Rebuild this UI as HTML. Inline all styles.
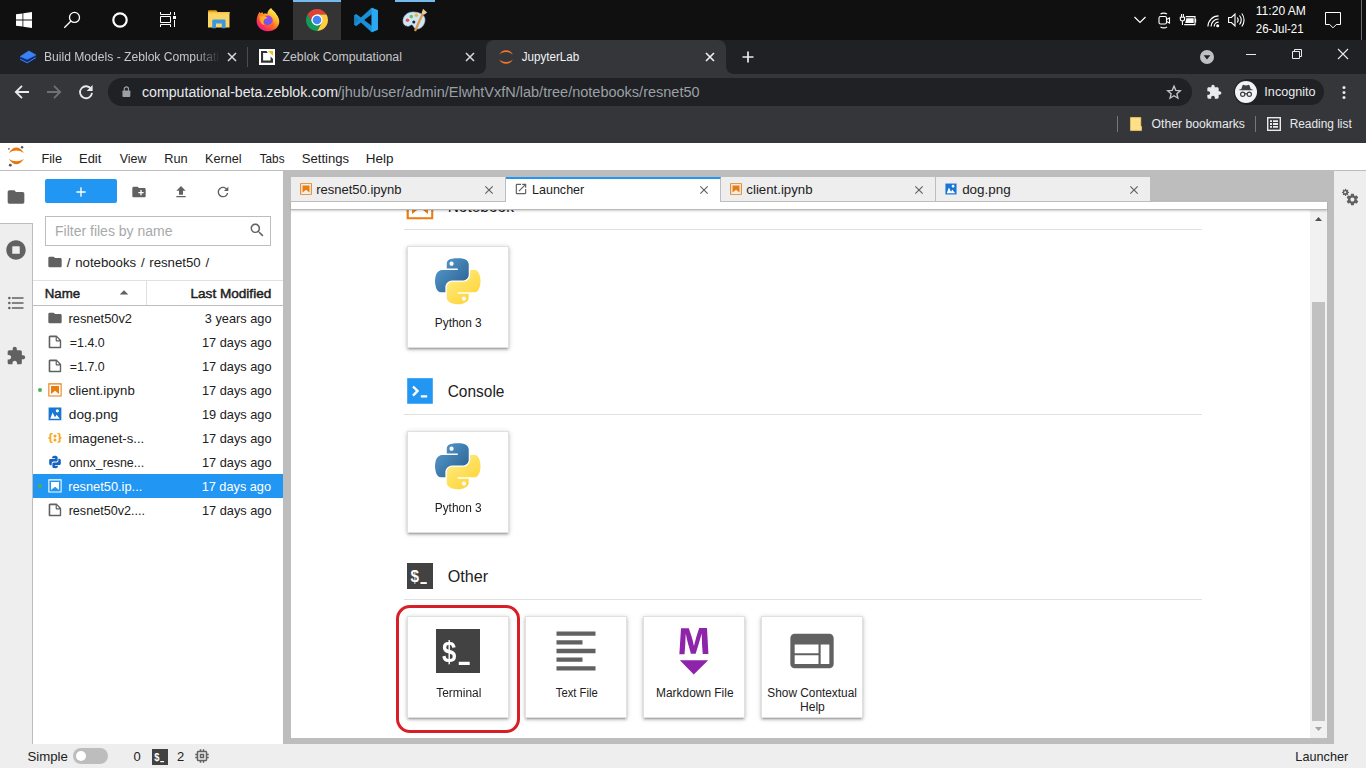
<!DOCTYPE html>
<html><head><meta charset="utf-8"><title>JupyterLab</title>
<style>
*{box-sizing:border-box;margin:0;padding:0}
html,body{width:1366px;height:768px;overflow:hidden;background:#fff;font-family:"Liberation Sans",sans-serif;}
.a{position:absolute}
.t{position:absolute;white-space:nowrap;line-height:1;transform-origin:0 50%}
svg{position:absolute;overflow:visible}
#tb{left:0;top:0;width:1366px;height:40px;background:#101010}
#strip{left:0;top:40px;width:1366px;height:34px;background:#202124}
#tool{left:0;top:74px;width:1366px;height:69px;background:#35363a}
#omni{left:108px;top:78px;width:1084px;height:28px;border-radius:14px;background:#202124}
.ct{color:#e8eaed;font-size:12px}
#menu{left:0;top:143px;width:1366px;height:28px;background:#fff;border-bottom:1px solid #bdbdbd}
.mi{color:#212121;font-size:13px;top:152px}
#lside{left:0;top:171px;width:33px;height:573px;background:#eee;border-right:1px solid #bdbdbd}
#rside{left:1334px;top:171px;width:32px;height:573px;background:#eee;}
#fb{left:33px;top:171px;width:250px;height:573px;background:#fff}
#dock{left:283px;top:171px;width:1051px;height:573px;background:#bdbdbd}
#status{left:0;top:744px;width:1366px;height:24px;background:#eee}
.f{font-size:13px;color:#212121}
.row{left:33px;width:250px;height:24px}
.card{width:102px;height:102px;background:#fff;border:1px solid #e0e0e0;box-shadow:0 2px 2px 0 rgba(0,0,0,.14),0 3px 1px -2px rgba(0,0,0,.12),0 1px 5px 0 rgba(0,0,0,.2)}
/*x*/.cl{font-size:12.5px;color:#212121;text-align:center;width:100px;line-height:14px;white-space:nowrap}
.sl{height:1px;background:#e0e0e0;left:404px;width:798px}
.st{font-size:16px;color:#212121}
#tt2{transform:translateX(-0.49px) scaleX(1.0226);transform-origin:0 50%}
#tt3{transform:translateX(-0.35px) scaleX(0.9699);transform-origin:0 50%}
#urlh{transform:translateX(-0.08px) scaleX(1.0121);transform-origin:0 50%}
#urlp{transform:translateX(-0.46px) scaleX(1.0362);transform-origin:0 50%}
#inc{transform:translateX(-0.64px) scaleX(1.0514);transform-origin:0 50%}
#ob{transform:translateX(-0.42px) scaleX(1.0144);transform-origin:0 50%}
#rl{transform:translateX(-0.35px) scaleX(0.9898);transform-origin:0 50%}
#clk1{transform:translateX(-0.21px) scaleX(1.0063);transform-origin:0 50%}
#clk2{transform:translateX(-0.26px) scaleX(0.9569);transform-origin:0 50%}
#m0{transform:translateX(-1.55px) scaleX(0.9805);transform-origin:0 50%}
#m1{transform:translateX(-0.93px) scaleX(0.9901);transform-origin:0 50%}
#m2{transform:translateX(-0.24px) scaleX(0.9573);transform-origin:0 50%}
#m3{transform:translateX(-0.71px) scaleX(0.9819);transform-origin:0 50%}
#m4{transform:translateX(0.01px) scaleX(0.9718);transform-origin:0 50%}
#m5{transform:translateX(0.72px) scaleX(0.9023);transform-origin:0 50%}
#m6{transform:translateX(-0.26px) scaleX(1.0065);transform-origin:0 50%}
#m7{transform:translateX(-0.25px) scaleX(1.0359);transform-origin:0 50%}
#bc{transform:translateX(-0.18px) scaleX(1.0170);transform-origin:0 50%}
#hn{transform:translateX(-1.25px) scaleX(1.0199);transform-origin:0 50%}
#hm{transform:translateX(-0.52px) scaleX(1.0449);transform-origin:0 50%}
#fn0{transform:translateX(-0.47px) scaleX(0.9861);transform-origin:0 50%}
#fn1{transform:translateX(0.86px) scaleX(0.9525);transform-origin:0 50%}
#fn2{transform:translateX(0.86px) scaleX(0.9525);transform-origin:0 50%}
#fn3{transform:translateX(-0.17px) scaleX(1.0134);transform-origin:0 50%}
#fn4{transform:translateX(-0.21px) scaleX(1.0493);transform-origin:0 50%}
#fn5{transform:translateX(-0.45px) scaleX(1.0064);transform-origin:0 50%}
#fn6{transform:translateX(-0.08px) scaleX(0.9543);transform-origin:0 50%}
#fn7{transform:translateX(-0.83px) scaleX(0.9862);transform-origin:0 50%}
#fn8{transform:translateX(-0.36px) scaleX(0.9705);transform-origin:0 50%}
#fd0{transform:translateX(0.53px) scaleX(0.9803);transform-origin:100% 50%}
#dt0{transform:translateX(-1.87px) scaleX(1.0021);transform-origin:0 50%}
#dt1{transform:translateX(-0.97px) scaleX(0.9628);transform-origin:0 50%}
#dt2{transform:translateX(-1.63px) scaleX(1.0167);transform-origin:0 50%}
#dt3{transform:translateX(-0.85px) scaleX(1.0325);transform-origin:0 50%}
#st_Notebook{transform:translateX(-1.29px) scaleX(0.9912);transform-origin:0 50%}
#st_Console{transform:translateX(-1.29px) scaleX(0.9912);transform-origin:0 50%}
#st_Other{transform:translateX(-1.35px) scaleX(1.0352);transform-origin:0 50%}
#c1{transform:translateX(0.56px) scaleX(0.9499);transform-origin:50% 50%}
#c2{transform:translateX(0.54px) scaleX(0.9515);transform-origin:50% 50%}
#c3{transform:translateX(1.17px) scaleX(0.9546);transform-origin:50% 50%}
#c4{transform:translateX(0.46px) scaleX(0.8985);transform-origin:50% 50%}
#c5{transform:translateX(1.16px) scaleX(0.9528);transform-origin:50% 50%}
#c6a{transform:translateX(-0.13px) scaleX(0.9473);transform-origin:50% 50%}
#c6b{transform:translateX(0.50px) scaleX(0.9691);transform-origin:50% 50%}
#sb1{transform:translateX(-0.56px) scaleX(1.0158);transform-origin:0 50%}
#sb4{transform:translateX(-0.65px) scaleX(0.9748);transform-origin:0 50%}
#fd1{transform:translateX(0.67px) scaleX(0.9818);transform-origin:100% 50%}
#fd2{transform:translateX(0.67px) scaleX(0.9818);transform-origin:100% 50%}
#fd3{transform:translateX(0.67px) scaleX(0.9818);transform-origin:100% 50%}
#fd4{transform:translateX(0.67px) scaleX(0.9818);transform-origin:100% 50%}
#fd5{transform:translateX(0.67px) scaleX(0.9818);transform-origin:100% 50%}
#fd6{transform:translateX(0.67px) scaleX(0.9818);transform-origin:100% 50%}
#fd7{transform:translateX(0.19px) scaleX(0.9794);transform-origin:100% 50%}
#fd8{transform:translateX(0.67px) scaleX(0.9818);transform-origin:100% 50%}
</style></head><body>
<div class="a" id="tb"></div>
<div class="a" id="strip"></div>
<div class="a" id="tool"></div>
<div class="a" id="omni"></div>
<div class="a" id="menu"></div>
<div class="a" id="lside"></div>
<div class="a" id="fb"></div>
<div class="a" id="dock"></div>
<div class="a" id="rside"></div>
<div class="a" id="status"></div>
<!-- taskbar -->
<div class="a" style="left:293px;top:0;width:48px;height:40px;background:#343434"></div>
<div class="a" style="left:293px;top:0;width:48px;height:2px;background:#76b9ed"></div>
<div class="a" style="left:395px;top:0;width:40px;height:2px;background:#76b9ed"></div>
<svg style="left:16px;top:12px" width="16" height="16" viewBox="0 0 16 16"><path fill="#fff" d="M0 2.300 6.500 1.400v6.200H0zM7.300 1.300 16 0v7.600H7.300zM0 8.400h6.500v6.200L0 13.700zM7.300 8.400H16V16l-8.700-1.200z"/></svg>
<svg style="left:62px;top:10px" width="20" height="20" viewBox="0 0 20 20"><circle cx="12.500" cy="7.400" r="5" fill="none" stroke="#fff" stroke-width="1.300"/><path d="M9 11 2.300 17.800" stroke="#fff" stroke-width="1.300" fill="none"/></svg>
<svg style="left:110px;top:10px" width="20" height="20" viewBox="0 0 20 20"><circle cx="10" cy="10" r="6.700" fill="none" stroke="#fff" stroke-width="2.200"/></svg>
<svg style="left:160px;top:12px" width="16" height="15" viewBox="0 0 16 15"><g fill="none" stroke="#fff" stroke-width="1"><path d="M.5 0V2.500H10.500V0M.5 4.500h10v6H.5zM.5 15V12.500H10.500V15M14.500 0V3M14.500 8V15"/></g><rect x="13" y="4" width="3" height="3" fill="#fff"/></svg>
<svg style="left:208px;top:10px" width="22" height="19" viewBox="0 0 22 19"><path fill="#e0a30e" d="M0 1.200C0 .6.400.3 1 .3h7.200l1.600 1.900H0z"/><path fill="#fbd667" d="M0 2h21.500v15.500H0z"/><path fill="#f6c649" d="M0 2h21.500v1.500H0z"/><path fill="#3b98e0" d="M4.200 18.300V11c0-.8.600-1.400 1.400-1.400h10.600c.8 0 1.400.6 1.400 1.400v7.300h-3.800v-4.800H8v4.800z"/></svg>
<!-- firefox -->
<svg style="left:256px;top:8px" width="24" height="24" viewBox="0 0 24 24"><defs><linearGradient id="ffg" x1="0.850" y1="0.100" x2="0.250" y2="0.950"><stop offset="0" stop-color="#fff25e"/><stop offset="0.300" stop-color="#ffbd2f"/><stop offset="0.550" stop-color="#ff7a22"/><stop offset="0.800" stop-color="#ff3550"/><stop offset="1" stop-color="#ee1f86"/></linearGradient><linearGradient id="ffp" x1="0.600" y1="0" x2="0.400" y2="1"><stop offset="0" stop-color="#b03fe0"/><stop offset="1" stop-color="#5560f2"/></linearGradient><linearGradient id="ffh" x1="0" y1="0" x2="1" y2="0.600"><stop offset="0" stop-color="#ff9a1f"/><stop offset="1" stop-color="#ffc23a"/></linearGradient></defs><path fill="url(#ffg)" d="M15.100 0C16.500 2.500 19 3.500 20.500 6.500C22.500 9 23.300 11.500 23.300 13.500C23.300 19 18.500 23.200 12 23.200C5.500 23.200.6 19 .6 13C.6 9 2 6 3.800 3.800L4.600 5.600 6.300 4 7.200 5.900C8.500 5.300 10 5.300 11.200 5.900C11.500 3.500 13 1.500 15.100 0z"/><circle cx="12" cy="12.300" r="4.700" fill="url(#ffp)"/><path fill="url(#ffh)" d="M3.300 8.300C6 7.300 9.300 7.800 11.600 10.100C10 10.300 8.400 11 7.700 12.400C7 14 7.500 16 9 17.300C5.800 17 3.400 14 3.300 8.300z"/><path fill="#ff5a30" opacity=".55" d="M7 15.500C8 18 11 19 13.500 18C16 17 17 14.500 16.600 12.500C18.500 15 17.500 19 14 20.300C10.500 21.500 7.200 19.500 7 15.500z"/></svg>
<!-- chrome -->
<svg style="left:305px;top:8px" width="24" height="24" viewBox="0 0 48 48"><circle cx="24" cy="24" r="12" fill="#fff"/><path fill="#db4437" d="M4.95 13.0A22 22 0 0 1 43.05 13.0L24.0 13.0A11 11 0 0 0 14.47 29.5z"/><path fill="#ffcd40" d="M43.05 13.0A22 22 0 0 1 24.0 46.0L33.53 29.5A11 11 0 0 0 24.0 13.0z"/><path fill="#0f9d58" d="M24.0 46.0A22 22 0 0 1 4.95 13.0L14.47 29.5A11 11 0 0 0 33.53 29.5z"/><circle cx="24" cy="24" r="10.800" fill="#fff"/><circle cx="24" cy="24" r="8.600" fill="#4285f4"/></svg>
<!-- vscode -->
<svg style="left:353px;top:7px" width="26" height="26" viewBox="0 0 24 24"><path fill="#1a8fd8" d="M17.200 0.700 7.300 9.800 3 6.500 1 7.500v9l2 1 4.300-3.300 9.900 9.100 5.800-2.400V3.100zM17.200 6.800v10.400L10.300 12z"/><path fill="#1478be" d="M1 7.500l4.500 4.500L1 16.500z" opacity=".7"/><path fill="#2aa9f2" d="M17.200.7 23 3.100v17.800l-5.800 2.400z"/></svg>
<!-- paint -->
<svg style="left:402px;top:8px" width="26" height="24" viewBox="0 0 26 24"><path fill="#cfe6f7" stroke="#9fc4e0" stroke-width=".6" d="M11 4C5 4 1 8.300 1 13c0 3.500 2.500 5.200 5 5.200 1.800 0 2.300-1.500 3.800-1.500 1.700 0 1.700 4.300 5.200 4.300 4 0 8-4 8-9.500C23 7 17.500 4 11 4z"/><circle cx="5.500" cy="12.200" r="1.800" fill="#e0584a"/><circle cx="9.300" cy="8.600" r="1.800" fill="#6cc060"/><circle cx="14.300" cy="7.300" r="1.800" fill="#f0b432"/><circle cx="11.800" cy="14" r="1.500" fill="#222"/><path d="M13 23 20.800 5.500" stroke="#dd9a4a" stroke-width="2.200"/><path fill="#e8c9a0" d="M19.500 5.500 21 .8 25.200 4.500 22 6.800z"/></svg>
<!-- tray -->
<svg style="left:1134px;top:16px" width="12" height="8" viewBox="0 0 12 8"><path d="M.5 1 6 6.500 11.500 1" fill="none" stroke="#fff" stroke-width="1.200"/></svg>
<svg style="left:1158px;top:12px" width="13" height="17" viewBox="0 0 13 17"><g fill="none" stroke="#fff" stroke-width="1.100"><rect x="1" y="4.500" width="7.500" height="7.500" rx="1.500"/><path d="M8.500 7.500 11.500 6v5L8.500 9.500M2.500 2.200C4 .8 7.500.8 9 2.200M2.500 14.800c1.500 1.400 5 1.400 6.500 0"/></g></svg>
<svg style="left:1179px;top:13px" width="18" height="13" viewBox="0 0 18 13"><g fill="none" stroke="#fff" stroke-width="1.100"><path d="M2.500 1v2.800M4.400 1v2.800M1.300 4.200h4.300v1.600a2.150 2.150 0 0 1-4.300 0zM3.450 8v4"/><path d="M6.800 3.600h9.200v8H5.200"/><path d="M16.600 5.800v3.600"/></g><path fill="#fff" d="M7.400 5.300h7.300v4.600H6.200z"/></svg>
<svg style="left:1207px;top:14.500px" width="12.500" height="12.500" viewBox="0 0 14 14"><g fill="none" stroke="#fff" stroke-width="1.300"><path d="M1 13C1 6.400 6.400 1 13 1"/><path d="M4.500 13c0-4.700 3.800-8.500 8.500-8.500"/><path d="M8 13c0-2.800 2.200-5 5-5"/></g><circle cx="12" cy="12" r="1.700" fill="#fff"/></svg>
<svg style="left:1228px;top:12px" width="17" height="16" viewBox="0 0 17 16"><g fill="none" stroke="#fff" stroke-width="1.100"><path d="M.6 5.500h2.800L7 2v12l-3.600-3.500H.6z"/><path d="M9.300 5.500c1 1.400 1 3.600 0 5M11.500 3.500c2 2.600 2 6.400 0 9M13.800 1.500c3 3.800 3 9.200 0 13"/></g></svg>
<div class="t" style="left:1256px;top:5px;color:#fff;font-size:12px;line-height:12px" id="clk1">11:20 AM</div>
<div class="t" style="left:1256px;top:23px;color:#fff;font-size:12px;line-height:12px" id="clk2">26-Jul-21</div>
<svg style="left:1325px;top:12px" width="16" height="17" viewBox="0 0 16 17"><path d="M.5.500H15.500V12.500H11.300L8 15.800 4.700 12.500H.5z" fill="none" stroke="#fff" stroke-width="1"/></svg>
<div class="a" style="left:1361px;top:0;width:1px;height:40px;background:#6a6a6a"></div>

<!-- chrome tabs -->
<svg style="left:478px;top:40px" width="256" height="34" viewBox="0 0 256 34"><path fill="#35363a" d="M0 34c4.400 0 8-3.600 8-8V8c0-4.400 3.600-8 8-8h224c4.400 0 8 3.600 8 8v18c0 4.400 3.600 8 8 8z"/></svg>
<svg style="left:19px;top:50px" width="18" height="14" viewBox="0 0 18 14"><path fill="#0b2f7a" d="M1 6.700 8.200 9.500 17 5.300V8L8.200 13.300 1 9.600z"/><path fill="none" stroke="#3b82f6" stroke-width="1" d="M1.200 9.300 8.200 12.800 16.800 7.700"/><path fill="#3b82f6" stroke="#3b82f6" stroke-width=".8" stroke-linejoin="round" d="M1.300 6.500 9.900 1 16.800 5 8.200 9.300z"/></svg>
<div class="t ct" id="tt1" style="left:44px;top:51px;color:#c6c8cb;width:176px;overflow:hidden;-webkit-mask-image:linear-gradient(90deg,#000 150px,transparent 176px)"><span style="display:inline-block;transform:scaleX(1.009);transform-origin:0 50%">Build Models - Zeblok Computational</span></div>
<svg style="left:227px;top:52px" width="10" height="10" viewBox="0 0 10 10"><path d="M1 1l8 8M9 1 1 9" stroke="#dadce0" stroke-width="1.500"/></svg>
<div class="a" style="left:247px;top:47px;width:1px;height:20px;background:#4a4c50"></div>
<svg style="left:259px;top:49px" width="16" height="16" viewBox="0 0 16 16"><rect width="16" height="16" fill="#fff"/><path fill="#333" d="M2 1.900H7.600L8.700 4H4.100V11.600H11.600V7.500L14 10V13.800H2z"/><path fill="#f0c020" d="M8.900 1.900H14V6.800z"/></svg>
<div class="t ct" id="tt2" style="left:283px;top:51px;color:#c6c8cb">Zeblok Computational</div>
<svg style="left:465px;top:52px" width="10" height="10" viewBox="0 0 10 10"><path d="M1 1l8 8M9 1 1 9" stroke="#dadce0" stroke-width="1.500"/></svg>
<svg style="left:498px;top:49px" width="16" height="16" viewBox="0 0 16 16"><path fill="#f37726" d="M1.200 5.800C2.200 3 4.900 1.200 8 1.200s5.800 1.800 6.800 4.600C13.200 4 10.800 3 8 3S2.800 4 1.200 5.800zM1.200 10.200C2.200 13 4.900 14.800 8 14.800s5.800-1.800 6.800-4.600C13.200 12 10.800 13 8 13s-5.200-1-6.800-2.800z"/></svg>
<div class="t ct" id="tt3" style="left:522px;top:51px;color:#f1f3f4">JupyterLab</div>
<svg style="left:705px;top:52px" width="10" height="10" viewBox="0 0 10 10"><path d="M1 1l8 8M9 1 1 9" stroke="#f1f3f4" stroke-width="1.600"/></svg>
<svg style="left:742px;top:51px" width="12" height="12" viewBox="0 0 12 12"><path d="M6 .5v11M.5 6h11" stroke="#e8eaed" stroke-width="1.700"/></svg>
<svg style="left:1200px;top:50px" width="14" height="14" viewBox="0 0 14 14"><circle cx="7" cy="7" r="7" fill="#bdc1c6"/><path fill="#202124" d="M3.600 5.200h6.800L7 9.600z"/></svg>
<div class="a" style="left:1246px;top:54px;width:10px;height:1px;background:#e8eaed"></div>
<svg style="left:1292px;top:49px" width="10" height="10" viewBox="0 0 10 10"><path fill="none" stroke="#e8eaed" stroke-width="1" d="M.5 2.500h7v7h-7zM2.500 2.500V.5h7v7h-2"/></svg>
<svg style="left:1338px;top:49px" width="10" height="10" viewBox="0 0 10 10"><path d="M0 0l10 10M10 0 0 10" stroke="#e8eaed" stroke-width="1.100"/></svg>
<!-- toolbar -->
<svg style="left:14px;top:84px" width="16" height="16" viewBox="0 0 16 16"><path d="M15 8H2.500M8 1.800 1.800 8 8 14.200" fill="none" stroke="#e8eaed" stroke-width="1.800"/></svg>
<svg style="left:46px;top:84px" width="16" height="16" viewBox="0 0 16 16"><path d="M1 8h12.500M8 1.800 14.200 8 8 14.200" fill="none" stroke="#6f7175" stroke-width="1.800"/></svg>
<svg style="left:78px;top:84px" width="16" height="16" viewBox="0 0 16 16"><path d="M13.200 5.200A6 6 0 1 0 14 8.800" fill="none" stroke="#e8eaed" stroke-width="1.800"/><path fill="#e8eaed" d="M14.600 1v6h-6z"/></svg>
<svg style="left:121.500px;top:86px" width="8.800" height="11.400" viewBox="0 0 10 13"><rect x=".5" y="5" width="9" height="7.500" rx="1" fill="#9aa0a6"/><path d="M2.600 5.500V3.400a2.400 2.400 0 0 1 4.800 0v2.100" fill="none" stroke="#9aa0a6" stroke-width="1.300"/></svg>
<div class="t" id="urlh" style="left:142px;top:85px;font-size:14px;line-height:14px;color:#e8eaed">computational-beta.zeblok.com</div>
<div class="t" id="urlp" style="left:338px;top:85px;font-size:14px;line-height:14px;color:#9aa0a6">/jhub/user/admin/ElwhtVxfN/lab/tree/notebooks/resnet50</div>
<svg style="left:1166px;top:84px" width="16" height="16" viewBox="0 0 24 24"><path fill="none" stroke="#c4c7ca" stroke-width="2" stroke-linejoin="miter" d="M12 3.200l2.700 6.300 6.800.6-5.200 4.500 1.600 6.700L12 17.700l-5.900 3.600 1.600-6.700-5.200-4.500 6.800-.6z"/></svg>
<svg style="left:1206px;top:84px" width="16" height="16" viewBox="0 0 24 24"><path fill="#e8eaed" d="M20.500 11H19V7c0-1.100-.9-2-2-2h-4V3.500C13 2.120 11.880 1 10.500 1S8 2.120 8 3.500V5H4c-1.100 0-1.990.9-1.990 2v3.800H3.500c1.490 0 2.700 1.210 2.700 2.700s-1.210 2.700-2.700 2.700H2V20c0 1.100.9 2 2 2h3.800v-1.500c0-1.490 1.210-2.700 2.700-2.700 1.490 0 2.700 1.210 2.700 2.700V22H17c1.100 0 2-.9 2-2v-4h1.500c1.380 0 2.500-1.120 2.500-2.500S21.880 11 20.500 11z"/></svg>
<div class="a" style="left:1234px;top:79px;width:90px;height:26px;border-radius:13px;background:#202124"></div>
<svg style="left:1235px;top:81px" width="22" height="22" viewBox="0 0 22 22"><circle cx="11" cy="11" r="11" fill="#f1f3f4"/><path fill="#3c4043" d="M7.500 4.500c.3-.7.800-.8 1.300-.6l2.200.7 2.200-.7c.5-.2 1 -.1 1.300.6l1.300 3.700h1.700v1.100h-13V8.200h1.700z"/><g fill="none" stroke="#3c4043" stroke-width="1.200"><circle cx="7.700" cy="13.300" r="2.100"/><circle cx="14.300" cy="13.300" r="2.100"/><path d="M9.800 12.900c.8-.5 1.600-.5 2.400 0"/></g></svg>
<div class="t ct" id="inc" style="left:1265px;top:86px;">Incognito</div>
<svg style="left:1342px;top:86px" width="4" height="13" viewBox="0 0 4 13"><circle cx="2" cy="1.600" r="1.500" fill="#e8eaed"/><circle cx="2" cy="6.500" r="1.500" fill="#e8eaed"/><circle cx="2" cy="11.400" r="1.500" fill="#e8eaed"/></svg>
<!-- bookmarks -->
<div class="a" style="left:1117px;top:116px;width:1px;height:16px;background:#75777b"></div>
<svg style="left:1130px;top:117px" width="12" height="14" viewBox="0 0 12 14"><path fill="#fde087" stroke="#5a4a10" stroke-width=".5" d="M0 0h11.200v9H12V14H0z"/></svg>
<div class="t ct" id="ob" style="left:1152px;top:118px">Other bookmarks</div>
<div class="a" style="left:1255px;top:116px;width:1px;height:16px;background:#75777b"></div>
<svg style="left:1267px;top:117px" width="14" height="14" viewBox="0 0 14 14"><rect x=".7" y=".7" width="12.600" height="12.600" fill="none" stroke="#e8eaed" stroke-width="1.400"/><path fill="#e8eaed" d="M3 3.200h2v1.900H3zM6 3.200h5v1.900H6zM3 6.050h2v1.900H3zM6 6.050h5v1.900H6zM3 8.900h2v1.900H3zM6 8.900h5v1.900H6z"/></svg>
<div class="t ct" id="rl" style="left:1290px;top:118px">Reading list</div>

<svg style="left:0;top:143px" width="40" height="28" viewBox="0 0 40 28"><path fill="#ec7307" d="M8.800 9.900Q16.350-.7 23.900 9.900Q16.350 5.100 8.800 9.900zM8.800 15.900Q16.350 26.500 23.900 15.900Q16.350 20.700 8.800 15.900z"/><circle cx="22.100" cy="4.200" r="1.200" fill="#555"/><circle cx="8.900" cy="5.800" r=".9" fill="#666"/><circle cx="10.300" cy="22.200" r="1.400" fill="#555"/></svg>
<div class="t mi" id="m0" style="left:42.5px">File</div>
<div class="t mi" id="m1" style="left:80.2px">Edit</div>
<div class="t mi" id="m2" style="left:119.8px">View</div>
<div class="t mi" id="m3" style="left:165.4px">Run</div>
<div class="t mi" id="m4" style="left:205px">Kernel</div>
<div class="t mi" id="m5" style="left:259px">Tabs</div>
<div class="t mi" id="m6" style="left:302px">Settings</div>
<div class="t mi" id="m7" style="left:366px">Help</div>
<div class="a" style="left:0;top:171px;width:33px;height:53px;background:#fff"></div>
<div class="a" style="left:0;top:223px;width:33px;height:1px;background:#bdbdbd"></div>
<svg style="left:6px;top:187px" width="20" height="20" viewBox="0 0 24 24"><path fill="#616161" d="M10 4H4c-1.100 0-1.990.9-1.990 2L2 18c0 1.100.9 2 2 2h16c1.100 0 2-.9 2-2V8c0-1.100-.9-2-2-2h-8l-2-2z"/></svg>
<svg style="left:6px;top:240px" width="20" height="20" viewBox="0 0 512 512"><path fill="#616161" d="M256 8C119 8 8 119 8 256s111 248 248 248 248-111 248-248S393 8 256 8zm96 328c0 8.800-7.200 16-16 16H176c-8.800 0-16-7.200-16-16V176c0-8.800 7.200-16 16-16h160c8.800 0 16 7.200 16 16v160z"/></svg>
<svg style="left:6px;top:293px" width="20" height="20" viewBox="0 0 24 24"><path fill="#616161" d="M7,5H21V7H7V5M7,13V11H21V13H7M4,4.500A1.500,1.500 0 0,1 5.500,6A1.500,1.500 0 0,1 4,7.500A1.500,1.500 0 0,1 2.500,6A1.500,1.500 0 0,1 4,4.500M4,10.500A1.500,1.500 0 0,1 5.500,12A1.500,1.500 0 0,1 4,13.500A1.500,1.500 0 0,1 2.500,12A1.500,1.500 0 0,1 4,10.500M7,19V17H21V19H7M4,16.500A1.500,1.500 0 0,1 5.500,18A1.500,1.500 0 0,1 4,19.500A1.500,1.500 0 0,1 2.500,18A1.500,1.500 0 0,1 4,16.500Z"/></svg>
<svg style="left:6px;top:346px" width="20" height="20" viewBox="0 0 24 24"><path fill="#616161" d="M20.500 11H19V7c0-1.100-.9-2-2-2h-4V3.500C13 2.120 11.880 1 10.500 1S8 2.120 8 3.500V5H4c-1.100 0-1.990.9-1.990 2v3.800H3.500c1.490 0 2.700 1.210 2.700 2.700s-1.210 2.700-2.700 2.700H2V20c0 1.100.9 2 2 2h3.800v-1.500c0-1.490 1.210-2.700 2.700-2.700 1.490 0 2.700 1.210 2.700 2.700V22H17c1.100 0 2-.9 2-2v-4h1.500c1.380 0 2.500-1.120 2.500-2.500S21.880 11 20.500 11z"/></svg>
<div class="a" style="left:45px;top:179px;width:72px;height:24px;background:#2196f3;border-radius:2px"></div>
<svg style="left:73px;top:184px" width="16" height="16" viewBox="0 0 24 24"><path fill="#fff" d="M19 13h-6v6h-2v-6H5v-2h6V5h2v6h6v2z"/></svg>
<svg style="left:131px;top:184px" width="16" height="16" viewBox="0 0 24 24"><path fill="#616161" d="M20 6h-8l-2-2H4c-1.110 0-1.990.89-1.990 2L2 18c0 1.110.89 2 2 2h16c1.110 0 2-.89 2-2V8c0-1.110-.89-2-2-2zm-1 8h-3v3h-2v-3h-3v-2h3V9h2v3h3v2z"/></svg>
<svg style="left:173px;top:184px" width="16" height="16" viewBox="0 0 24 24"><path fill="#616161" d="M9 16h6v-6h4l-7-7-7 7h4zm-4 2h14v2H5z"/></svg>
<svg style="left:215px;top:184px" width="16" height="16" viewBox="0 0 18 18"><path fill="#616161" d="M9 13.500c-2.490 0-4.500-2.010-4.500-4.500S6.510 4.500 9 4.500c1.240 0 2.360.52 3.170 1.330L10 8h5V3l-1.760 1.760C12.150 3.680 10.660 3 9 3 5.690 3 3.010 5.690 3.010 9S5.690 15 9 15c2.970 0 5.430-2.160 5.900-5h-1.520c-.46 2-2.240 3.500-4.380 3.500z"/></svg>
<div class="a" style="left:45px;top:216px;width:226px;height:30px;border:1px solid #bdbdbd;background:#fff"></div>
<div class="t" id="flt" style="left:55px;top:224px;font-size:14px;line-height:14px;color:#a9a9a9">Filter files by name</div>
<svg style="left:249px;top:222px" width="16" height="16" viewBox="0 0 18 18"><path fill="#616161" d="M12.100,10.900h-0.700l-0.200-0.200c0.800-1,1.300-2.200,1.300-3.500c0-3-2.400-5.400-5.400-5.400S1.800,4.200,1.800,7.100s2.400,5.400,5.400,5.400 c1.300,0,2.500-0.500,3.500-1.300l0.200,0.200v0.700l4.100,4.100l1.200-1.200L12.100,10.900z M7.100,10.900c-2.100,0-3.700-1.700-3.700-3.700s1.700-3.700,3.700-3.700s3.700,1.700,3.700,3.700 S9.200,10.900,7.100,10.900z"/></svg>
<svg style="left:47px;top:254px" width="16" height="16" viewBox="0 0 24 24"><path fill="#616161" d="M10 4H4c-1.100 0-1.990.9-1.990 2L2 18c0 1.100.9 2 2 2h16c1.100 0 2-.9 2-2V8c0-1.100-.9-2-2-2h-8l-2-2z"/></svg>
<div class="t f" id="bc" style="left:67px;top:256px;word-spacing:1px">/ notebooks / resnet50 /</div>
<div class="a" style="left:33px;top:280px;width:250px;height:1px;background:#e0e0e0"></div>
<div class="a" style="left:33px;top:305px;width:250px;height:1px;background:#bdbdbd"></div>
<div class="a" style="left:146px;top:281px;width:1px;height:24px;background:#e0e0e0"></div>
<div class="t f" id="hn" style="left:45.500px;top:287px;-webkit-text-stroke:.45px #212121">Name</div>
<svg style="left:119px;top:290px" width="10" height="5" viewBox="0 0 10 5"><path fill="#616161" d="M.7 4.500 5 .3l4.300 4.200z"/></svg>
<div class="t f" id="hm" style="left:191px;top:287px;-webkit-text-stroke:.45px #212121">Last Modified</div>
<svg style="left:47px;top:310px" width="16" height="16" viewBox="0 0 24 24"><path fill="#616161" d="M10 4H4c-1.100 0-1.990.9-1.990 2L2 18c0 1.100.9 2 2 2h16c1.100 0 2-.9 2-2V8c0-1.100-.9-2-2-2h-8l-2-2z"/></svg>
<div class="t f" id="fn0" style="left:69px;top:312px;color:#212121">resnet50v2</div>
<div class="t f" id="fd0" style="right:1095px;top:312px;color:#212121;transform-origin:100% 50%">3 years ago</div>
<svg style="left:47px;top:334px" width="16" height="16" viewBox="0 0 22 22"><path fill="#616161" d="M19.300 8.200l-5.500-5.500c-.3-.3-.7-.5-1.200-.5H3.900c-.8.100-1.600.9-1.600 1.800v14.100c0 .9.700 1.600 1.600 1.600h14c.9 0 1.600-.7 1.600-1.600V9.400c.1-.5-.1-.9-.2-1.200zm-5.800-3.300l3.400 3.600h-3.400V4.900zm3.900 12.700H4.700c-.1 0-.2 0-.2-.2V4.700c0-.2.1-.3.2-.3h7.200v4.400s0 .8.300 1.100c.3.300 1.100.3 1.100.3h4.300v7.200s-.1.200-.2.200z"/></svg>
<div class="t f" id="fn1" style="left:69px;top:336px;color:#212121">=1.4.0</div>
<div class="t f" id="fd1" style="right:1095px;top:336px;color:#212121;transform-origin:100% 50%">17 days ago</div>
<svg style="left:47px;top:358px" width="16" height="16" viewBox="0 0 22 22"><path fill="#616161" d="M19.300 8.200l-5.500-5.500c-.3-.3-.7-.5-1.200-.5H3.900c-.8.100-1.600.9-1.600 1.800v14.100c0 .9.700 1.600 1.600 1.600h14c.9 0 1.600-.7 1.600-1.600V9.400c.1-.5-.1-.9-.2-1.200zm-5.800-3.300l3.400 3.600h-3.400V4.900zm3.900 12.700H4.700c-.1 0-.2 0-.2-.2V4.700c0-.2.1-.3.2-.3h7.200v4.400s0 .8.300 1.100c.3.300 1.100.3 1.100.3h4.300v7.200s-.1.200-.2.200z"/></svg>
<div class="t f" id="fn2" style="left:69px;top:360px;color:#212121">=1.7.0</div>
<div class="t f" id="fd2" style="right:1095px;top:360px;color:#212121;transform-origin:100% 50%">17 days ago</div>
<div class="a" style="left:38px;top:388px;width:4px;height:4px;border-radius:2px;background:#4caf50"></div>
<svg style="left:47px;top:382px" width="16" height="16" viewBox="0 0 22 22"><path fill="#ea7d10" d="M18.700 3.300v15.400H3.300V3.300h15.400m1.500-1.500H1.800v18.300h18.300l.1-18.300z"/><path fill="#ea7d10" d="M16.500 16.500l-5.400-4.300-5.600 4.300v-11h11z"/></svg>
<div class="t f" id="fn3" style="left:69px;top:384px;color:#212121">client.ipynb</div>
<div class="t f" id="fd3" style="right:1095px;top:384px;color:#212121;transform-origin:100% 50%">17 days ago</div>
<svg style="left:47px;top:406px" width="16" height="16" viewBox="0 0 22 22"><path fill="#fff" d="M2.200 2.200h17.500v17.500H2.200z"/><path fill="#1976d2" d="M2.200 2.200v17.500h17.500l.1-17.500H2.200zm12.100 2.200c1.200 0 2.200 1 2.200 2.200s-1 2.200-2.200 2.200-2.200-1-2.200-2.200 1-2.200 2.200-2.200zM4.400 17.600l3.300-8.800 3.300 6.600 2.200-3.200 4.400 5.400H4.400z"/></svg>
<div class="t f" id="fn4" style="left:69px;top:408px;color:#212121">dog.png</div>
<div class="t f" id="fd4" style="right:1095px;top:408px;color:#212121;transform-origin:100% 50%">19 days ago</div>
<svg style="left:47px;top:430px" width="16" height="16" viewBox="0 0 22 22"><g fill="#f9a825"><path d="M20.200 11.800c-1.600 0-1.700.5-1.700 1 0 .4.100.9.100 1.300.1.500.1.900.1 1.300 0 1.700-1.400 2.300-3.500 2.300h-.9v-1.900h.5c1.100 0 1.400 0 1.400-.8 0-.3 0-.6-.1-1 0-.4-.1-.8-.1-1.200 0-1.300 0-1.800 1.300-2-1.300-.2-1.300-.7-1.300-2 0-.4.100-.8.100-1.200.1-.4.100-.7.100-1 0-.8-.4-.7-1.400-.8h-.5V4.100h.9c2.200 0 3.500.7 3.500 2.300 0 .4-.1.900-.1 1.300-.1.500-.1.900-.1 1.300 0 .5.200 1 1.700 1v1.800zM1.800 10.100c1.600 0 1.700-.5 1.700-1 0-.4-.1-.9-.1-1.300-.1-.5-.1-.9-.1-1.300 0-1.600 1.400-2.300 3.500-2.300h.9v1.900h-.5c-1 0-1.400 0-1.400.8 0 .3 0 .6.1 1 0 .2.100.6.100 1 0 1.300 0 1.800-1.300 2C6 11.200 6 11.700 6 13c0 .4-.1.800-.1 1.200-.1.300-.1.700-.1 1 0 .8.300.8 1.400.8h.5v1.900h-.9c-2.100 0-3.500-.6-3.500-2.300 0-.4.100-.9.100-1.300.1-.5.100-.9.100-1.300 0-.5-.2-1-1.700-1v-1.900z"/><circle cx="11" cy="13.800" r="2.100"/><circle cx="11" cy="8.200" r="2.100"/></g></svg>
<div class="t f" id="fn5" style="left:69px;top:432px;color:#212121">imagenet-s...</div>
<div class="t f" id="fd5" style="right:1095px;top:432px;color:#212121;transform-origin:100% 50%">17 days ago</div>
<svg style="left:47px;top:454px" width="16" height="16" viewBox="0 0 22 22"><g fill="#1565c0"><path d="M11.100 6.900V5.800H6.900c0-.5 0-1.300.2-1.600.4-.7.800-1.100 1.700-1.400 1.700-.3 2.500-.3 3.900-.1 1 .1 1.900.9 1.900 1.900v4.200c0 .5-.9 1.600-2 1.600H8.800c-1.500 0-2.400 1.400-2.400 2.800v2.200H4.700C3.500 15.100 3 14 3 13.100V9c-.1-1 .6-2 1.800-2 1.500-.1 6.300-.1 6.300-.1z"/><path d="M10.900 15.100v1.100h4.200c0 .5 0 1.300-.2 1.600-.4.700-.8 1.100-1.700 1.400-1.700.3-2.500.3-3.900.1-1-.1-1.900-.9-1.900-1.900v-4.200c0-.5.900-1.600 2-1.600h3.800c1.500 0 2.400-1.400 2.400-2.800V6.600h1.700C18.500 6.900 19 8 19 8.900V13c0 1-.7 2.100-1.900 2.100h-6.200z"/></g></svg>
<div class="t f" id="fn6" style="left:69px;top:456px;color:#212121">onnx_resne...</div>
<div class="t f" id="fd6" style="right:1095px;top:456px;color:#212121;transform-origin:100% 50%">17 days ago</div>
<div class="a row" style="top:474px;background:#2196f3"></div>
<div class="a" style="left:38px;top:484px;width:4px;height:4px;border-radius:2px;background:#4caf50"></div>
<svg style="left:47px;top:478px" width="16" height="16" viewBox="0 0 22 22"><path fill="#fff" d="M18.700 3.300v15.400H3.300V3.300h15.400m1.500-1.500H1.800v18.300h18.300l.1-18.300z"/><path fill="#fff" d="M16.500 16.500l-5.400-4.300-5.600 4.300v-11h11z"/></svg>
<div class="t f" id="fn7" style="left:69px;top:480px;color:#fff">resnet50.ip...</div>
<div class="t f" id="fd7" style="right:1095px;top:480px;color:#fff;transform-origin:100% 50%">17 days ago</div>
<svg style="left:47px;top:502px" width="16" height="16" viewBox="0 0 22 22"><path fill="#616161" d="M19.300 8.200l-5.500-5.500c-.3-.3-.7-.5-1.200-.5H3.900c-.8.100-1.600.9-1.600 1.800v14.100c0 .9.700 1.600 1.600 1.600h14c.9 0 1.600-.7 1.600-1.600V9.400c.1-.5-.1-.9-.2-1.200zm-5.800-3.300l3.400 3.600h-3.400V4.900zm3.900 12.700H4.700c-.1 0-.2 0-.2-.2V4.700c0-.2.1-.3.2-.3h7.200v4.400s0 .8.300 1.100c.3.300 1.100.3 1.100.3h4.300v7.200s-.1.200-.2.200z"/></svg>
<div class="t f" id="fn8" style="left:69px;top:504px;color:#212121">resnet50v2....</div>
<div class="t f" id="fd8" style="right:1095px;top:504px;color:#212121;transform-origin:100% 50%">17 days ago</div>
<div class="a" style="left:291px;top:210px;width:1036px;height:528px;background:#fff"></div>
<div class="a" style="left:1310px;top:210px;width:17px;height:528px;background:#f1f1f1"></div>
<div class="a" style="left:1312px;top:302px;width:13px;height:419px;background:#c1c1c1"></div>
<svg style="left:1315px;top:217px" width="7" height="4" viewBox="0 0 7 4"><path fill="#505050" d="M0 4 3.500 0 7 4z"/></svg>
<svg style="left:1315px;top:727px" width="7" height="4" viewBox="0 0 7 4"><path fill="#a3a3a3" d="M0 0 3.500 4 7 0z"/></svg>
<svg style="left:1340px;top:187px" width="20" height="20" viewBox="0 0 24 24"><path fill="#616161" d="M14.900 17.450C16.250 17.450 17.350 16.350 17.350 15C17.350 13.650 16.250 12.550 14.900 12.550C13.540 12.550 12.450 13.650 12.450 15C12.450 16.350 13.540 17.450 14.900 17.450ZM20.100 15.680L21.580 16.840C21.710 16.950 21.750 17.130 21.660 17.290L20.260 19.710C20.170 19.860 20 19.920 19.830 19.860L18.090 19.160C17.730 19.440 17.330 19.670 16.910 19.850L16.640 21.700C16.620 21.870 16.470 22 16.300 22H13.500C13.320 22 13.180 21.870 13.150 21.700L12.890 19.850C12.460 19.670 12.070 19.440 11.710 19.160L9.960 19.860C9.810 19.920 9.620 19.860 9.540 19.710L8.140 17.290C8.050 17.130 8.090 16.950 8.220 16.840L9.700 15.680L9.650 15L9.700 14.310L8.220 13.160C8.090 13.050 8.050 12.860 8.140 12.710L9.540 10.290C9.620 10.130 9.810 10.070 9.960 10.130L11.710 10.840C12.070 10.560 12.460 10.320 12.890 10.150L13.150 8.290C13.180 8.130 13.320 8 13.500 8H16.300C16.470 8 16.620 8.130 16.640 8.290L16.910 10.150C17.330 10.320 17.730 10.560 18.090 10.840L19.830 10.130C20 10.070 20.170 10.130 20.260 10.290L21.660 12.710C21.750 12.860 21.710 13.050 21.580 13.160L20.100 14.310L20.150 15L20.100 15.680Z"/><g transform="translate(6.200 6.300)"><path fill="#616161" d="M0-4.200h.9l.3 1.100.9.400 1-.6.700.7-.6 1 .4.900 1.100.3v1l-1.100.3-.4.900.6 1-.7.700-1-.6-.9.400-.3 1.100h-1l-.3-1.100-.9-.4-1 .6-.7-.7.600-1-.4-.9-1.100-.3v-1l1.100-.3.400-.9-.6-1 .7-.7 1 .6.900-.4.300-1.100z"/><circle r="1.300" fill="#eee"/></g></svg>
<svg width="0" height="0" style="left:0;top:0"><defs><linearGradient id="pyb" x1="0" y1="0" x2="0.800" y2="0.800"><stop offset="0" stop-color="#5a9fd4"/><stop offset="1" stop-color="#306998"/></linearGradient><linearGradient id="pyy" x1="0.800" y1="0.850" x2="0.300" y2="0.200"><stop offset="0" stop-color="#ffd43b"/><stop offset="1" stop-color="#ffe873"/></linearGradient></defs></svg>
<div class="a" style="left:291px;top:210px;width:1019px;height:528px;overflow:hidden"><div class="a" style="left:-291px;top:-210px;width:1366px;height:768px">
<svg style="left:404px;top:190px" width="32" height="32" viewBox="0 0 22 22"><path fill="#ea7d10" d="M18.700 3.300v15.400H3.300V3.300h15.400m1.500-1.500H1.800v18.300h18.300l.1-18.300z"/><path fill="#ea7d10" d="M16.500 16.500l-5.400-4.300-5.600 4.300v-11h11z"/></svg>
<div class="t st" id="st_Notebook" style="left:448.500px;top:198.5px;line-height:16px;font-size:15.600px">Notebook</div>
<div class="a sl" style="top:229px"></div>
<svg style="left:404px;top:375px" width="32" height="32" viewBox="0 0 200 200"><path fill="#2196f3" d="M20 19.800h160v159.900H20z"/><path fill="#fff" d="M105 127.300h40v12.800h-40zM51.100 77L74 99.900l-23.300 23.300 10.500 10.500 23.300-23.300L95 99.900 84.500 89.400 61.600 66.500z"/></svg>
<div class="t st" id="st_Console" style="left:448.500px;top:383.5px;line-height:16px;font-size:15.600px">Console</div>
<div class="a sl" style="top:414px"></div>
<div class="a" style="left:407px;top:563px;width:44px;height:44px;background:#424242;transform:scale(0.5909);transform-origin:0 0"><div class="t" style="left:5.700px;top:8px;font-size:29px;line-height:30px;color:#fff;font-weight:bold"><span style="display:inline-block;transform:scaleX(.89);transform-origin:0 50%">$</span><span style="display:inline-block;transform:translate(0.900px,-6.700px) scale(.65,2.900);transform-origin:0 84%">_</span></div></div>
<div class="t st" id="st_Other" style="left:448.500px;top:568.5px;line-height:16px;font-size:15.600px">Other</div>
<div class="a sl" style="top:599px"></div>
<div class="a card" style="left:407px;top:246px"></div>
<svg style="left:435px;top:257.5px" width="45.500" height="45.500" viewBox="0 0 111 110"><path fill="url(#pyb)" d="M54.918785,9.1927e-4C50.335132,0.02221727,45.957846,0.41313697,42.106285,1.0946693,30.760069,3.0991731,28.700036,7.2947714,28.700035,15.032169v10.21875h26.8125v3.40625h-26.8125-10.0625c-7.792459,0-14.6157588,4.683717-16.7499998,13.59375-2.46181998,10.212966-2.57101508,16.586023,0,27.25,1.9059283,7.937852,6.4575432,13.593748,14.2499998,13.59375h9.21875v-12.25c0-8.849902,7.657144-16.656248,16.75-16.65625h26.78125c7.454951,0,13.406253-6.138164,13.40625-13.625v-25.53125c0-7.2663386-6.12998-12.7247771-13.40625-13.9374997C64.281548,0.32794397,59.502438,-0.02037903,54.918785,9.1927e-4zm-14.5,8.21875012c2.769547,0,5.03125,2.2986456,5.03125,5.1249996-2e-6,2.816336-2.261703,5.09375-5.03125,5.09375-2.779476-1e-6-5.03125-2.277415-5.03125-5.09375-1e-6-2.826353,2.251774-5.1249996,5.03125-5.1249996z"/><path fill="url(#pyy)" d="M85.637535,28.657169v11.90625c0,9.230755-7.825895,16.999999-16.75,17h-26.78125c-7.335833,0-13.406249,6.278483-13.40625,13.625v25.531247c0,7.266344,6.318588,11.540324,13.40625,13.625004,8.487331,2.49561,16.626237,2.94663,26.78125,0,6.750155-1.95439,13.406253-5.88761,13.40625-13.625004V86.500919h-26.78125v-3.40625h26.78125,13.406254c7.792461,0,10.696251-5.435408,13.406241-13.59375,2.79933-8.398886,2.68022-16.475776,0-27.25-1.92578-7.757441-5.60387-13.59375-13.406241-13.59375zm-15.0625,64.65625c2.779478,3e-6,5.03125,2.277417,5.03125,5.093747-2e-6,2.826354-2.251775,5.125004-5.03125,5.125004-2.769547,0-5.03125-2.29865-5.03125-5.125004,2e-6-2.81633,2.261697-5.093747,5.03125-5.093747z"/></svg>
<div class="a cl f" style="left:408px;top:316px"><span id="c1" style="display:inline-block">Python 3</span></div>
<div class="a card" style="left:407px;top:431px"></div>
<svg style="left:435px;top:442.5px" width="45.500" height="45.500" viewBox="0 0 111 110"><path fill="url(#pyb)" d="M54.918785,9.1927e-4C50.335132,0.02221727,45.957846,0.41313697,42.106285,1.0946693,30.760069,3.0991731,28.700036,7.2947714,28.700035,15.032169v10.21875h26.8125v3.40625h-26.8125-10.0625c-7.792459,0-14.6157588,4.683717-16.7499998,13.59375-2.46181998,10.212966-2.57101508,16.586023,0,27.25,1.9059283,7.937852,6.4575432,13.593748,14.2499998,13.59375h9.21875v-12.25c0-8.849902,7.657144-16.656248,16.75-16.65625h26.78125c7.454951,0,13.406253-6.138164,13.40625-13.625v-25.53125c0-7.2663386-6.12998-12.7247771-13.40625-13.9374997C64.281548,0.32794397,59.502438,-0.02037903,54.918785,9.1927e-4zm-14.5,8.21875012c2.769547,0,5.03125,2.2986456,5.03125,5.1249996-2e-6,2.816336-2.261703,5.09375-5.03125,5.09375-2.779476-1e-6-5.03125-2.277415-5.03125-5.09375-1e-6-2.826353,2.251774-5.1249996,5.03125-5.1249996z"/><path fill="url(#pyy)" d="M85.637535,28.657169v11.90625c0,9.230755-7.825895,16.999999-16.75,17h-26.78125c-7.335833,0-13.406249,6.278483-13.40625,13.625v25.531247c0,7.266344,6.318588,11.540324,13.40625,13.625004,8.487331,2.49561,16.626237,2.94663,26.78125,0,6.750155-1.95439,13.406253-5.88761,13.40625-13.625004V86.500919h-26.78125v-3.40625h26.78125,13.406254c7.792461,0,10.696251-5.435408,13.406241-13.59375,2.79933-8.398886,2.68022-16.475776,0-27.25-1.92578-7.757441-5.60387-13.59375-13.406241-13.59375zm-15.0625,64.65625c2.779478,3e-6,5.03125,2.277417,5.03125,5.093747-2e-6,2.826354-2.251775,5.125004-5.03125,5.125004-2.769547,0-5.03125-2.29865-5.03125-5.125004,2e-6-2.81633,2.261697-5.093747,5.03125-5.093747z"/></svg>
<div class="a cl f" style="left:408px;top:501px"><span id="c2" style="display:inline-block">Python 3</span></div>
<div class="a card" style="left:407px;top:616px"></div>
<div class="a" style="left:436px;top:629px;width:44px;height:44px;background:#424242;transform:scale(1.0000);transform-origin:0 0"><div class="t" style="left:5.700px;top:8px;font-size:29px;line-height:30px;color:#fff;font-weight:bold"><span style="display:inline-block;transform:scaleX(.89);transform-origin:0 50%">$</span><span style="display:inline-block;transform:translate(0.900px,-6.700px) scale(.65,2.900);transform-origin:0 84%">_</span></div></div>
<div class="a cl f" style="left:408px;top:686px"><span id="c3" style="display:inline-block">Terminal</span></div>
<div class="a card" style="left:525px;top:616px"></div>
<svg style="left:550px;top:624.5px" width="52" height="52" viewBox="0 0 24 24"><path fill="#616161" d="M15 15H3v2h12v-2zm0-8H3v2h12V7zM3 13h18v-2H3v2zm0 8h18v-2H3v2zM3 3v2h18V3H3z"/></svg>
<div class="a cl f" style="left:526px;top:686px"><span id="c4" style="display:inline-block">Text File</span></div>
<div class="a card" style="left:643px;top:616px"></div>
<svg style="left:668px;top:624.5px" width="52" height="52" viewBox="0 0 22 22"><path fill="#8e24aa" d="M5 14.900h12l-6.100 6zm9.400-6.800c0-1.300-.1-2.900-.1-4.500-.4 1.400-.9 2.900-1.300 4.300l-1.300 4.300h-2L8.500 7.900c-.4-1.300-.7-2.900-1-4.300-.1 1.600-.1 3.200-.2 4.600L7 12.400H4.800l.7-11h3.300L10 5c.4 1.200.7 2.700 1 3.900.3-1.200.7-2.700 1-3.900l1.200-3.700h3.300l.6 11h-2.400l-.3-4.200z"/></svg>
<div class="a cl f" style="left:644px;top:686px"><span id="c5" style="display:inline-block">Markdown File</span></div>
<div class="a card" style="left:761px;top:616px"></div>
<svg style="left:786px;top:624.5px" width="52" height="52" viewBox="0 0 24 24"><path fill="#616161" d="M20 4H4c-1.100 0-1.990.9-1.990 2L2 18c0 1.100.9 2 2 2h16c1.100 0 2-.9 2-2V6c0-1.100-.9-2-2-2zm-5 14H4v-4h11v4zm0-5H4V9h11v4zm5 5h-4V9h4v9z"/></svg>
<div class="a cl f" style="left:762px;top:686px"><span id="c6" style="display:inline-block"><span id="c6a" style="display:inline-block">Show Contextual</span><br><span id="c6b" style="display:inline-block">Help</span></span></div>
<div class="a" style="left:396px;top:605px;width:124px;height:128px;border:3px solid #d81f27;border-radius:14px"></div>
</div></div>
<div class="a" style="left:291px;top:201px;width:1036px;height:9px;background:#fff;border-top:1px solid #bdbdbd;border-bottom:1px solid #b8b8b8;box-shadow:0 1px 2px rgba(0,0,0,.2)"></div>
<div class="a" style="left:291px;top:177px;width:215px;height:25px;background:#eee;border-right:1px solid #bdbdbd;border-bottom:1px solid #bdbdbd"></div>
<svg style="left:299px;top:182px" width="14" height="14" viewBox="0 0 22 22"><path fill="#ea7d10" d="M18.700 3.300v15.400H3.300V3.300h15.400m1.500-1.500H1.800v18.300h18.300l.1-18.300z"/><path fill="#ea7d10" d="M16.500 16.500l-5.400-4.300-5.600 4.300v-11h11z"/></svg>
<div class="t f" id="dt0" style="left:317.5px;top:183px">resnet50.ipynb</div>
<svg style="left:482px;top:183px" width="14" height="14" viewBox="0 0 24 24"><path fill="#616161" d="M19 6.410L17.590 5 12 10.590 6.410 5 5 6.410 10.590 12 5 17.590 6.410 19 12 13.410 17.590 19 19 17.590 13.410 12z"/></svg>
<div class="a" style="left:506px;top:177px;width:215px;height:25px;background:#fff;border-right:1px solid #bdbdbd;border-top:2px solid #2196f3"></div>
<svg style="left:514px;top:182px" width="14" height="14" viewBox="0 0 24 24"><path fill="#616161" d="M19 19H5V5h7V3H5a2 2 0 00-2 2v14a2 2 0 002 2h14c1.100 0 2-.9 2-2v-7h-2v7zM14 3v2h3.590l-9.830 9.830 1.410 1.410L19 6.410V10h2V3h-7z"/></svg>
<div class="t f" id="dt1" style="left:532.5px;top:183px">Launcher</div>
<svg style="left:697px;top:183px" width="14" height="14" viewBox="0 0 24 24"><path fill="#616161" d="M19 6.410L17.590 5 12 10.590 6.410 5 5 6.410 10.590 12 5 17.590 6.410 19 12 13.410 17.590 19 19 17.590 13.410 12z"/></svg>
<div class="a" style="left:721px;top:177px;width:215px;height:25px;background:#eee;border-right:1px solid #bdbdbd;border-bottom:1px solid #bdbdbd"></div>
<svg style="left:729px;top:182px" width="14" height="14" viewBox="0 0 22 22"><path fill="#ea7d10" d="M18.700 3.300v15.400H3.300V3.300h15.400m1.500-1.500H1.800v18.300h18.300l.1-18.300z"/><path fill="#ea7d10" d="M16.500 16.500l-5.400-4.300-5.600 4.300v-11h11z"/></svg>
<div class="t f" id="dt2" style="left:747.5px;top:183px">client.ipynb</div>
<svg style="left:912px;top:183px" width="14" height="14" viewBox="0 0 24 24"><path fill="#616161" d="M19 6.410L17.590 5 12 10.590 6.410 5 5 6.410 10.590 12 5 17.590 6.410 19 12 13.410 17.590 19 19 17.590 13.410 12z"/></svg>
<div class="a" style="left:936px;top:177px;width:215px;height:25px;background:#eee;border-right:1px solid #bdbdbd;border-bottom:1px solid #bdbdbd"></div>
<svg style="left:944px;top:182px" width="14" height="14" viewBox="0 0 22 22"><path fill="#fff" d="M2.200 2.200h17.500v17.500H2.200z"/><path fill="#1976d2" d="M2.200 2.200v17.500h17.500l.1-17.500H2.200zm12.100 2.200c1.200 0 2.200 1 2.200 2.200s-1 2.200-2.200 2.200-2.200-1-2.200-2.200 1-2.200 2.200-2.200zM4.400 17.600l3.300-8.800 3.300 6.600 2.200-3.200 4.400 5.400H4.400z"/></svg>
<div class="t f" id="dt3" style="left:962.5px;top:183px">dog.png</div>
<svg style="left:1127px;top:183px" width="14" height="14" viewBox="0 0 24 24"><path fill="#616161" d="M19 6.410L17.590 5 12 10.590 6.410 5 5 6.410 10.590 12 5 17.590 6.410 19 12 13.410 17.590 19 19 17.590 13.410 12z"/></svg>
<div class="t f" id="sb1" style="left:28px;top:750px">Simple</div>
<div class="a" style="left:73px;top:748px;width:35px;height:16px;border-radius:8px;background:#bdbdbd"></div>
<div class="a" style="left:76px;top:751px;width:10px;height:10px;border-radius:5px;background:#fff"></div>
<div class="t f" id="sb2" style="left:133.500px;top:750px">0</div>
<div class="a" style="left:152px;top:749px;width:44px;height:44px;background:#424242;transform:scale(0.3636);transform-origin:0 0"><div class="t" style="left:5.700px;top:8px;font-size:29px;line-height:30px;color:#fff;font-weight:bold"><span style="display:inline-block;transform:scaleX(.89);transform-origin:0 50%">$</span><span style="display:inline-block;transform:translate(0.900px,-6.700px) scale(.65,2.900);transform-origin:0 84%">_</span></div></div>
<div class="t f" id="sb3" style="left:177px;top:750px">2</div>
<svg style="left:193px;top:747px" width="18" height="18" viewBox="0 0 24 24"><path fill="#616161" d="M15 9H9v6h6V9zm-2 4h-2v-2h2v2zm8-2V9h-2V7c0-1.100-.9-2-2-2h-2V3h-2v2h-2V3H9v2H7c-1.100 0-2 .9-2 2v2H3v2h2v2H3v2h2v2c0 1.100.9 2 2 2h2v2h2v-2h2v2h2v-2h2c1.100 0 2-.9 2-2v-2h2v-2h-2v-2h2zm-4 6H7V7h10v10z"/></svg>
<div class="t f" id="sb4" style="left:1296px;top:750px">Launcher</div>
</body></html>
